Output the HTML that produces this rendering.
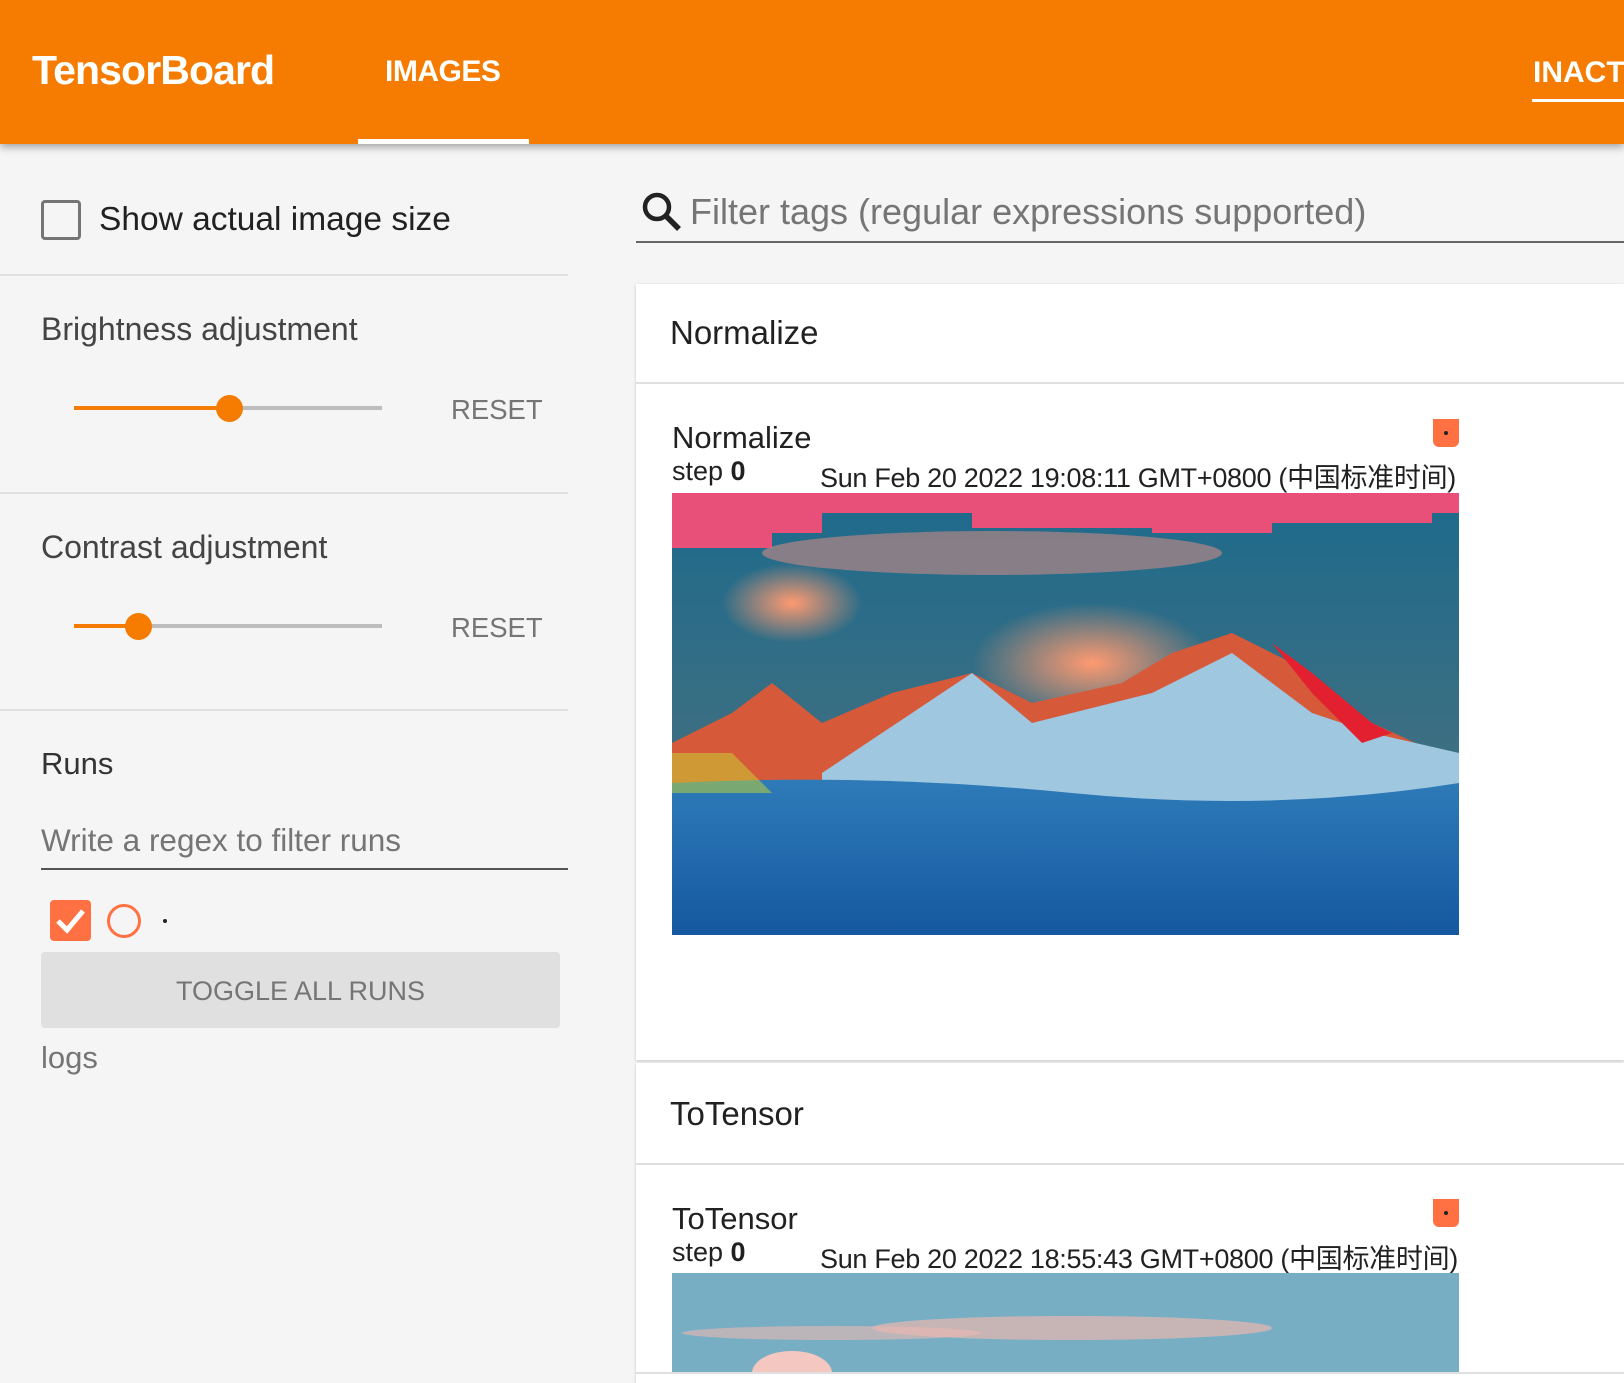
<!DOCTYPE html>
<html><head><meta charset="utf-8"><style>
*{margin:0;padding:0;box-sizing:border-box}
body{width:1624px;height:1374px;overflow:hidden;background:#f5f5f5;font-family:"Liberation Sans","Noto Sans CJK SC",sans-serif;position:relative}
.a{position:absolute;white-space:nowrap}
#hdr{position:absolute;left:0;top:0;width:1624px;height:144px;background:#f57c00;box-shadow:0 3px 8px rgba(0,0,0,.35);z-index:2}
.div{position:absolute;left:0;width:568px;height:2px;background:#e0e0e0}
.card{position:absolute;left:636px;width:988px;background:#fff;box-shadow:0 1px 3px rgba(0,0,0,.2)}
.t{color:#212121}
</style></head><body>
<div id="hdr">
 <div class="a" style="left:32px;top:47px;font-size:41px;font-weight:bold;color:#fff;letter-spacing:-0.9px">TensorBoard</div>
 <div class="a" style="left:385px;top:55px;font-size:30px;font-weight:bold;color:#fff;letter-spacing:-0.5px">IMAGES</div>
 <div class="a" style="left:358px;top:139px;width:171px;height:5px;background:#fff"></div>
 <div class="a" style="left:1533px;top:56px;font-size:30px;font-weight:bold;color:#fff">INACTIVE</div>
 <div class="a" style="left:1532px;top:99px;width:92px;height:3px;background:#fff"></div>
</div>

<div class="a" style="left:41px;top:200px;width:40px;height:40px;border:3px solid #757575;border-radius:4px"></div>
<div class="a t" style="left:99px;top:201px;font-size:33.5px">Show actual image size</div>
<div class="div" style="top:274px"></div>

<div class="a" style="left:41px;top:311px;font-size:32px;color:#444">Brightness adjustment</div>
<div class="a" style="left:74px;top:406px;width:308px;height:4px;background:#bdbdbd"></div>
<div class="a" style="left:74px;top:406px;width:155px;height:4px;background:#f57c00"></div>
<div class="a" style="left:216px;top:395px;width:27px;height:27px;border-radius:50%;background:#f57c00"></div>
<div class="a" style="left:451px;top:394px;font-size:27.5px;color:#757575">RESET</div>
<div class="div" style="top:492px"></div>

<div class="a" style="left:41px;top:529px;font-size:32px;color:#444">Contrast adjustment</div>
<div class="a" style="left:74px;top:624px;width:308px;height:4px;background:#bdbdbd"></div>
<div class="a" style="left:74px;top:624px;width:64px;height:4px;background:#f57c00"></div>
<div class="a" style="left:125px;top:613px;width:27px;height:27px;border-radius:50%;background:#f57c00"></div>
<div class="a" style="left:451px;top:612px;font-size:27.5px;color:#757575">RESET</div>
<div class="div" style="top:709px"></div>

<div class="a" style="left:41px;top:746px;font-size:31px;color:#333">Runs</div>
<div class="a" style="left:41px;top:822px;font-size:31.5px;color:#757575">Write a regex to filter runs</div>
<div class="a" style="left:41px;top:868px;width:527px;height:2px;background:#555"></div>
<div class="a" style="left:50px;top:900px;width:41px;height:41px;border-radius:4px;background:#ff7043">
 <svg width="41" height="41" viewBox="0 0 41 41"><path d="M8 21 L17 30 L33 11" stroke="#fff" stroke-width="5" fill="none"/></svg></div>
<div class="a" style="left:107px;top:904px;width:34px;height:34px;border-radius:50%;border:3px solid #ff7043"></div>
<div class="a" style="left:163px;top:919px;width:4px;height:4px;border-radius:50%;background:#222"></div>
<div class="a" style="left:41px;top:952px;width:519px;height:76px;background:#e0e0e0;border-radius:4px;font-size:27px;color:#757575;text-align:center;line-height:78px">TOGGLE ALL RUNS</div>
<div class="a" style="left:41px;top:1040px;font-size:31px;color:#757575">logs</div>

<svg class="a" style="left:640px;top:190px" width="44" height="44" viewBox="0 0 44 44"><circle cx="17" cy="17" r="12" stroke="#222" stroke-width="4.5" fill="none"/><path d="M26 26 L39 39" stroke="#222" stroke-width="5.5"/></svg>
<div class="a" style="left:690px;top:191px;font-size:36px;color:#757575">Filter tags (regular expressions supported)</div>
<div class="a" style="left:636px;top:241px;width:988px;height:2px;background:#666"></div>

<div class="card" style="top:284px;height:776px">
 <div class="a t" style="left:34px;top:30px;font-size:33px">Normalize</div>
 <div class="a" style="left:0;top:98px;width:988px;height:2px;background:#e0e0e0"></div>
 <div class="a t" style="left:36px;top:136px;font-size:31px">Normalize</div>
 <div class="a t" style="left:36px;top:172px;font-size:27px">step <b>0</b></div>
 <div class="a t" style="left:184px;top:172px;font-size:27px;letter-spacing:-0.3px">Sun Feb 20 2022 19:08:11 GMT+0800 (中国标准时间)</div>
 <div class="a" style="left:797px;top:135px;width:26px;height:28px;background:#ff7043;border-radius:0 0 6px 6px"><div class="a" style="left:11px;top:12px;width:4px;height:4px;border-radius:50%;background:#222"></div></div>
 <svg class="a" style="left:36px;top:209px" width="787" height="442" viewBox="0 0 787 442" preserveAspectRatio="none">
  <defs>
   <linearGradient id="sky" x1="0" y1="0" x2="0" y2="1"><stop offset="0" stop-color="#1d6a8c"/><stop offset=".6" stop-color="#3e6f82"/><stop offset="1" stop-color="#566d74"/></linearGradient>
   <linearGradient id="sea" x1="0" y1="0" x2="0" y2="1"><stop offset="0" stop-color="#2e7bb8"/><stop offset="1" stop-color="#1558a0"/></linearGradient>
   <radialGradient id="cl" cx=".5" cy=".5" r=".5"><stop offset="0" stop-color="#ff9a70"/><stop offset="1" stop-color="#ff9a70" stop-opacity="0"/></radialGradient>
  </defs>
  <rect width="787" height="442" fill="url(#sky)"/>
  <path d="M0 0 H787 V20 H760 V30 H600 V40 H480 V35 H300 V20 H150 V40 H100 V55 H0Z" fill="#e8507a"/>
  <ellipse cx="320" cy="60" rx="230" ry="22" fill="#c98a85" opacity=".6"/>
  <ellipse cx="120" cy="110" rx="70" ry="40" fill="url(#cl)"/>
  <ellipse cx="420" cy="170" rx="120" ry="60" fill="url(#cl)"/>
  <path d="M0 250 L60 220 L100 190 L150 230 L220 200 L300 180 L360 210 L450 190 L500 160 L560 140 L620 170 L700 230 L787 270 V300 H0Z" fill="#d65a3a"/>
  <path d="M150 280 L300 180 L360 230 L480 200 L560 160 L640 220 L700 240 L787 260 V320 H150Z" fill="#9fc7e0"/>
  <path d="M600 150 L640 180 L700 230 L720 240 L690 250 L640 200Z" fill="#e22030"/>
  <path d="M0 290 Q200 280 400 300 T787 290 V442 H0Z" fill="url(#sea)"/>
  <path d="M0 300 L100 300 L60 260 L0 260Z" fill="#c8d830" opacity=".5"/>
 </svg>
</div>

<div class="card" style="top:1063px;height:320px">
 <div class="a t" style="left:34px;top:32px;font-size:33px">ToTensor</div>
 <div class="a" style="left:0;top:100px;width:988px;height:2px;background:#e0e0e0"></div>
 <div class="a t" style="left:36px;top:138px;font-size:31px">ToTensor</div>
 <div class="a t" style="left:36px;top:174px;font-size:27px">step <b>0</b></div>
 <div class="a t" style="left:184px;top:174px;font-size:27px;letter-spacing:-0.3px">Sun Feb 20 2022 18:55:43 GMT+0800 (中国标准时间)</div>
 <div class="a" style="left:797px;top:136px;width:26px;height:28px;background:#ff7043;border-radius:0 0 6px 6px"><div class="a" style="left:11px;top:12px;width:4px;height:4px;border-radius:50%;background:#222"></div></div>
 <svg class="a" style="left:36px;top:210px" width="787" height="100" viewBox="0 0 787 100">
  <rect width="787" height="100" fill="#78aec4"/>
  <ellipse cx="400" cy="55" rx="200" ry="12" fill="#e8b8b0" opacity=".7"/>
  <ellipse cx="160" cy="60" rx="150" ry="7" fill="#e8b8b0" opacity=".6"/>
  <ellipse cx="120" cy="100" rx="40" ry="22" fill="#f4c8c0"/>
 </svg>
</div>
<div class="a" style="left:636px;top:1372px;width:988px;height:2px;background:#e0e0e0"></div>
</body></html>
